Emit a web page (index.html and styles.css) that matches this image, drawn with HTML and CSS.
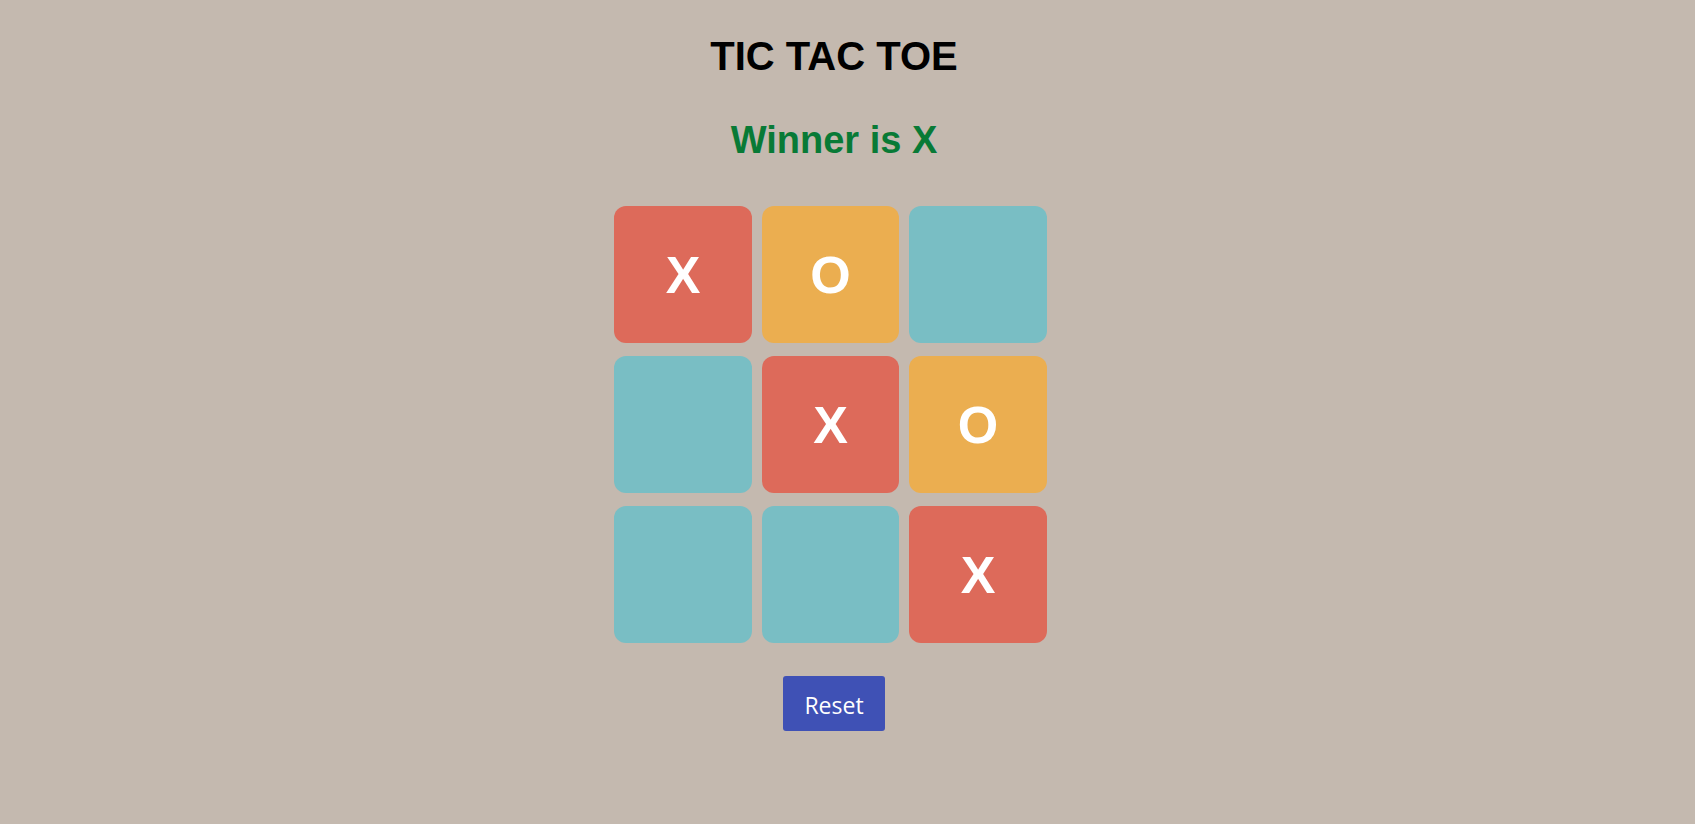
FILE: index.html
```html
<!DOCTYPE html>
<html lang="en">
<head>
<meta charset="utf-8">
<title>Tic Tac Toe</title>
<link rel="stylesheet" href="styles.css">
</head>
<body>
<main class="game">
  <h1 class="title">TIC TAC TOE</h1>
  <h2 class="status">Winner is X</h2>
  <div class="board">
    <div class="cell cell-x">X</div>
    <div class="cell cell-o">O</div>
    <div class="cell cell-empty"></div>
    <div class="cell cell-empty"></div>
    <div class="cell cell-x">X</div>
    <div class="cell cell-o">O</div>
    <div class="cell cell-empty"></div>
    <div class="cell cell-empty"></div>
    <div class="cell cell-x">X</div>
  </div>
  <button class="reset" type="button">Reset</button>
</main>
</body>
</html>
```
FILE: styles.css
```css
html, body {
  margin: 0;
  padding: 0;
}

body {
  background: #c4b9af;
  font-family: "Liberation Sans", Arial, sans-serif;
  min-height: 824px;
}

.game {
  display: flex;
  flex-direction: column;
  align-items: center;
  padding: 34px 27px 0 0;
}

.title {
  margin: 0;
  font-size: 40px;
  font-weight: bold;
  line-height: normal;
  color: #000;
}

.status {
  margin: 40px 0 0;
  font-size: 38px;
  font-weight: bold;
  line-height: normal;
  color: #087a36;
}

.board {
  margin: 44px 7px 0 0;
  display: grid;
  grid-template-columns: 138px 137px 138px;
  grid-template-rows: repeat(3, 137px);
  column-gap: 10px;
  row-gap: 13px;
}

.cell {
  border-radius: 12px;
  display: flex;
  align-items: center;
  justify-content: center;
  color: #fff;
  font-size: 52px;
  font-weight: bold;
}

.cell-x {
  background: #dd6a5a;
}

.cell-o {
  background: #ebae50;
}

.cell-empty {
  background: #79bec4;
}

.reset {
  margin-top: 33px;
  width: 102px;
  height: 55px;
  border: none;
  border-radius: 3px;
  background: #3f51b5;
  color: #fff;
  font-family: "Open Sans", "Noto Sans", sans-serif;
  font-size: 23px;
  padding: 3px 0 0;
  display: flex;
  align-items: center;
  justify-content: center;
}
```
